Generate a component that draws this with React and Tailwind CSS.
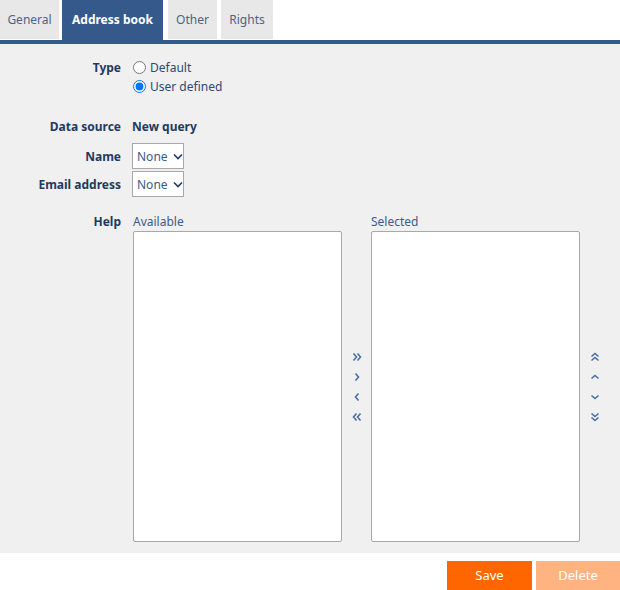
import React from 'react';

const Chev = ({ dir, double }) => {
    // single chevron pointing right, rotated as needed
    const rot = { right: 0, left: 180, up: -90, down: 90 }[dir];
    return (
        <svg width="10" height="10" viewBox="0 0 10 10" style={{ transform: `rotate(${rot}deg)` }}>
            {double ? (
                <>
                    <polyline points="1.5,1.5 4.5,5 1.5,8.5" fill="none" stroke="#4a6fa5" strokeWidth="1.6" />
                    <polyline points="5.5,1.5 8.5,5 5.5,8.5" fill="none" stroke="#4a6fa5" strokeWidth="1.6" />
                </>
            ) : (
                <polyline points="3.5,1.5 6.5,5 3.5,8.5" fill="none" stroke="#4a6fa5" strokeWidth="1.6" />
            )}
        </svg>
    );
};

const Select = () => (
    <div className="w-[52px] h-[26px] bg-white border border-[#a8a8a8] flex items-center pl-[4px] gap-[5px] text-[#3b5b86]">
        <span>None</span>
        <svg width="10" height="7" viewBox="0 0 10 7">
            <polyline points="1,1.5 5,5.5 9,1.5" fill="none" stroke="#1f3a5f" strokeWidth="1.6" />
        </svg>
    </div>
);

const Label = ({ children, className = '' }) => (
    <div className={`text-right font-bold text-[#1f3a5f] ${className}`}>{children}</div>
);

const tabs = [
    { name: 'General', w: 'w-[59px]' },
    { name: 'Address book', w: 'w-[101px]', active: true },
    { name: 'Other', w: 'w-[49px]' },
    { name: 'Rights', w: 'w-[52px]' },
];

export default function App() {
    return (
        <div className="w-[620px] h-[590px] bg-white font-['Noto_Sans',sans-serif] text-[12px] flex flex-col">
            {/* tabs */}
            <div className="flex h-[40px] gap-[4px]">
                {tabs.map((t) => (
                    <div
                        key={t.name}
                        className={`${t.w} flex items-center justify-center ${
                            t.active
                                ? 'bg-[#34598a] text-white font-bold h-[40px] ml-[-1px] mr-[1px]'
                                : 'bg-[#e8e8e8] text-[#4e6387] h-[39px]'
                        }`}
                    >
                        {t.name}
                    </div>
                ))}
            </div>
            <div className="h-[4px] bg-[#34598a]" />

            {/* panel */}
            <div className="h-[509px] bg-[#f0f0f0] pt-[14px] pb-[11px] grid grid-cols-[121px_1fr] gap-x-[11px] content-start leading-[19px]">
                <Label>Type</Label>
                <div className="flex flex-col text-[#2b4a75]">
                    <label className="flex items-center gap-[4px] h-[19px] ml-[1px]">
                        <input type="radio" name="type" className="m-0 w-[13px] h-[13px]" />
                        Default
                    </label>
                    <label className="flex items-center gap-[4px] h-[19px] ml-[1px]">
                        <input type="radio" name="type" defaultChecked className="m-0 w-[13px] h-[13px]" />
                        User defined
                    </label>
                </div>

                <Label className="mt-[21px]">Data source</Label>
                <div className="mt-[21px] font-bold text-[#1f3a5f]">New query</div>

                <Label className="mt-[7px] h-[26px] flex items-center justify-end">Name</Label>
                <div className="mt-[7px]"><Select /></div>

                <Label className="mt-[2px] h-[26px] flex items-center justify-end">Email address</Label>
                <div className="mt-[2px]"><Select /></div>

                <Label className="mt-[15px]">Help</Label>
                <div className="mt-[15px] ml-[1px] flex">
                    <div className="flex flex-col">
                        <div className="text-[#3d5c85] h-[19px]">Available</div>
                        <div className="w-[209px] h-[311px] bg-white border border-[#a8a8a8] rounded-[2px]" />
                    </div>
                    <div className="w-[29px] pt-[19px] flex flex-col items-center justify-center gap-[10px]">
                        <Chev dir="right" double />
                        <Chev dir="right" />
                        <Chev dir="left" />
                        <Chev dir="left" double />
                    </div>
                    <div className="flex flex-col">
                        <div className="text-[#3d5c85] h-[19px]">Selected</div>
                        <div className="w-[209px] h-[311px] bg-white border border-[#a8a8a8] rounded-[2px]" />
                    </div>
                    <div className="w-[29px] pt-[19px] flex flex-col items-center justify-center gap-[10px]">
                        <Chev dir="up" double />
                        <Chev dir="up" />
                        <Chev dir="down" />
                        <Chev dir="down" double />
                    </div>
                </div>
            </div>

            {/* buttons */}
            <div className="flex justify-end gap-[4px] mt-[8px]">
                <button className="w-[85px] h-[29px] bg-[#ff6600] text-white text-[13px]">Save</button>
                <button className="w-[84px] h-[29px] bg-[#ffb380] text-white text-[13px]">Delete</button>
            </div>
        </div>
    );
}
